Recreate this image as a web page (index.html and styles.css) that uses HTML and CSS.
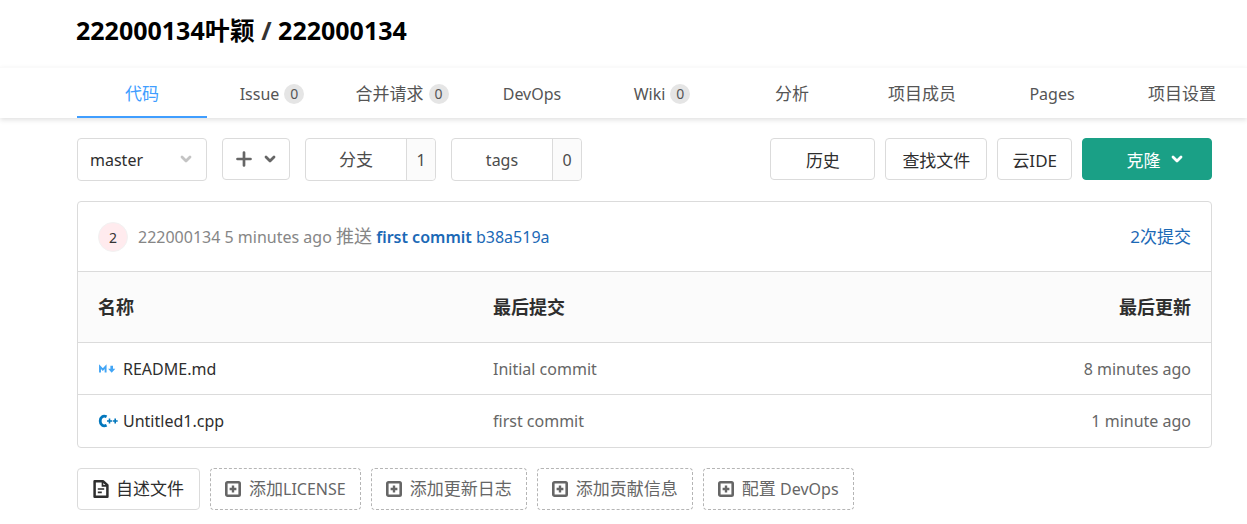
FILE: index.html
```html
<!DOCTYPE html>
<html lang="zh-CN">
<head>
  <meta charset="UTF-8">
  <title>222000134叶颖 / 222000134</title>
  <link rel="stylesheet" href="styles.css">
</head>
<body>

  <!-- shared icons -->
  <svg class="sprite" aria-hidden="true">
    <symbol id="chevron" viewBox="0 0 12 12">
      <path d="M2 4l4 4 4-4" fill="none" stroke="currentColor" stroke-width="2.8" stroke-linecap="round" stroke-linejoin="round"/>
    </symbol>
    <symbol id="plus-square" viewBox="0 0 16 16">
      <rect x="1.3" y="1.3" width="13.4" height="13.4" rx="1.2" fill="none" stroke="currentColor" stroke-width="2.6"/>
      <path d="M8 4.6v6.8M4.6 8h6.8" stroke="currentColor" stroke-width="2.4"/>
    </symbol>
  </svg>

  <header>
    <h1><a href="#">222000134叶颖</a> / <a href="#">222000134</a></h1>
  </header>

  <nav class="tabs">
    <a class="tab active" href="#">代码</a>
    <a class="tab latin" href="#">Issue <span class="badge">0</span></a>
    <a class="tab" href="#">合并请求 <span class="badge">0</span></a>
    <a class="tab latin" href="#">DevOps</a>
    <a class="tab latin" href="#">Wiki <span class="badge">0</span></a>
    <a class="tab" href="#">分析</a>
    <a class="tab" href="#">项目成员</a>
    <a class="tab latin" href="#">Pages</a>
    <a class="tab" href="#">项目设置</a>
  </nav>

  <main>
    <div class="toolbar">
      <div class="branch-select">
        <select aria-label="分支">
          <option>master</option>
        </select>
        <svg class="chevron"><use href="#chevron"/></svg>
      </div>
      <button class="btn add-btn" type="button" aria-label="添加">
        <svg class="plus" viewBox="0 0 16 16"><path d="M8 1.5v13M1.5 8h13" stroke="currentColor" stroke-width="2.7" stroke-linecap="round"/></svg>
        <svg class="chevron"><use href="#chevron"/></svg>
      </button>
      <a class="counter" href="#"><span class="counter-label">分支</span><span class="counter-num">1</span></a>
      <a class="counter latin" href="#"><span class="counter-label">tags</span><span class="counter-num">0</span></a>

      <div class="actions">
        <button class="btn history-btn" type="button">历史</button>
        <button class="btn" type="button">查找文件</button>
        <button class="btn ide-btn" type="button">云IDE</button>
        <button class="btn clone-btn" type="button">克隆 <svg class="chevron"><use href="#chevron"/></svg></button>
      </div>
    </div>

    <section class="files">
      <div class="commit">
        <span class="avatar">2</span>
        <p>222000134 5 minutes ago <span class="cjk">推送</span> <a class="message" href="#">first commit</a> <a href="#">b38a519a</a></p>
        <a class="commit-count" href="#">2次提交</a>
      </div>
      <table>
        <thead>
          <tr>
            <th class="name">名称</th>
            <th>最后提交</th>
            <th class="updated">最后更新</th>
          </tr>
        </thead>
        <tbody>
          <tr>
            <td>
              <a class="file" href="#">
                <svg class="file-icon" viewBox="0 0 20 16">
                  <path d="M2 11.5V5.6l2.8 3 2.8-3v5.9" fill="none" stroke="#42a5f5" stroke-width="1.9"/>
                  <path d="M12.4 4.7h2.6v3.1h2.3l-3.6 4-3.6-4h2.3z" fill="#42a5f5"/>
                </svg>
                README.md
              </a>
            </td>
            <td>Initial commit</td>
            <td class="updated">8 minutes ago</td>
          </tr>
          <tr>
            <td>
              <a class="file" href="#">
                <svg class="file-icon" viewBox="0 0 20 16" fill="none" stroke="#0277bd">
                  <path d="M8.6 3.8C5 2 2.2 4.3 2.2 8s2.8 6 6.4 4.2" stroke-width="2.8"/>
                  <path d="M9 8h5M11.5 5.5v5M14.7 8h5M17.2 5.5v5" stroke-width="1.6"/>
                </svg>
                Untitled1.cpp
              </a>
            </td>
            <td>first commit</td>
            <td class="updated">1 minute ago</td>
          </tr>
        </tbody>
      </table>
    </section>

    <div class="shortcuts">
      <a class="btn" href="#">
        <svg viewBox="0 0 16 18"><path d="M1.6 1.3h8.6L14.4 5.2v11.5H1.6z" fill="none" stroke="currentColor" stroke-width="2.5" stroke-linejoin="round"/><path d="M9.5 1v4.8H14M4.8 9h6.4M4.8 12.4h4" fill="none" stroke="currentColor" stroke-width="1.7"/></svg>
        自述文件
      </a>
      <a class="btn dashed" href="#"><svg><use href="#plus-square"/></svg><span>添加<span class="latin">LICENSE</span></span></a>
      <a class="btn dashed" href="#"><svg><use href="#plus-square"/></svg>添加更新日志</a>
      <a class="btn dashed" href="#"><svg><use href="#plus-square"/></svg>添加贡献信息</a>
      <a class="btn dashed" href="#"><svg><use href="#plus-square"/></svg><span>配置 <span class="latin">DevOps</span></span></a>
    </div>
  </main>

</body>
</html>
```

FILE: styles.css
```css
* {
  box-sizing: border-box;
}

body {
  margin: 0;
  font-family: "Noto Sans", "Noto Sans CJK SC", sans-serif;
  font-size: 16px;
  line-height: 24px;
  color: #2e2e2e;
  background-color: #fff;
}

a {
  color: inherit;
  text-decoration: none;
}

.sprite {
  display: none;
}

header {
  padding: 12px 76px 19px;
}

h1 {
  margin: 0;
  font-size: 25px;
  line-height: 36px;
  color: #333;
}

h1 a {
  color: #000;
}

/* tabs */
.tabs {
  display: flex;
  padding-left: 77px;
  border-top: 1px solid #fafafa;
  box-shadow: 0 2px 5px rgba(0, 0, 0, 0.12);
}

.tab {
  flex: none;
  display: flex;
  align-items: center;
  justify-content: center;
  gap: 5px;
  width: 130px;
  height: 50px;
  padding-top: 4px;
  border-bottom: 2px solid transparent;
  font-size: 17px;
  color: #555;
}

.tab.active {
  color: #409eff;
  border-bottom-color: #409eff;
}

.latin,
.tab.latin,
.counter.latin {
  font-size: 16px;
}

.badge {
  min-width: 20px;
  border-radius: 10px;
  background-color: #e5e5e5;
  font-size: 14px;
  line-height: 20px;
  text-align: center;
}

main {
  padding: 20px 35px 14px 77px;
}

/* toolbar */
.toolbar {
  display: flex;
  gap: 15px;
  margin-bottom: 20px;
}

.btn {
  display: inline-flex;
  align-items: center;
  justify-content: center;
  height: 42px;
  padding: 0 16px;
  border: 1px solid #dbdbdb;
  border-radius: 4px;
  background-color: #fff;
  font-family: inherit;
  font-size: 17px;
  color: #2e2e2e;
  cursor: pointer;
}

.chevron {
  width: 12px;
  height: 12px;
}

.branch-select {
  position: relative;
  width: 130px;
}

.branch-select select {
  appearance: none;
  width: 100%;
  height: 43px;
  padding: 0 12px;
  border: 1px solid #dbdbdb;
  border-radius: 4px;
  background-color: #fff;
  font-family: inherit;
  font-size: 16px;
  color: #2e2e2e;
}

.branch-select .chevron {
  position: absolute;
  top: 15px;
  right: 15px;
  color: #c4c4c4;
  pointer-events: none;
}

.add-btn {
  gap: 12px;
  width: 68px;
  padding: 0 12px;
  color: #666;
}

.plus {
  width: 16px;
  height: 16px;
}

.counter {
  display: flex;
  width: 131px;
  height: 43px;
  border: 1px solid #dbdbdb;
  border-radius: 4px;
  font-size: 17px;
  line-height: 42px;
  text-align: center;
  color: #4c4c4c;
}

.counter-label {
  flex: 1;
}

.counter-num {
  width: 29px;
  border-left: 1px solid #dbdbdb;
  border-radius: 0 4px 4px 0;
  background-color: #fbfbfb;
  font-size: 16px;
}

.actions {
  display: flex;
  gap: 10px;
  margin-left: auto;
}

.history-btn {
  width: 105px;
}

.ide-btn {
  padding: 0 14px;
}

.clone-btn {
  gap: 10px;
  width: 130px;
  padding-left: 30px;
  padding-right: 15px;
  border-color: #1aa086;
  background-color: #1aa086;
  color: #fff;
}

/* file list */
.files {
  border: 1px solid #dbdbdb;
  border-radius: 4px;
  margin-bottom: 20px;
}

.commit {
  display: flex;
  align-items: center;
  height: 69px;
  padding: 0 20px;
  color: #868686;
}

.commit p {
  margin: 0 auto 0 10px;
}

.commit a {
  color: #1b69b6;
}

.commit .message {
  font-weight: 600;
}

.commit-count {
  font-size: 17px;
}

.cjk {
  font-size: 18px;
}

.avatar {
  width: 30px;
  height: 30px;
  border: 1px solid #f2f2f2;
  border-radius: 50%;
  background-color: #ffebee;
  font-size: 14px;
  line-height: 30px;
  text-align: center;
  color: #333;
}

table {
  width: 100%;
  border-collapse: collapse;
}

th,
td {
  height: 52px;
  padding: 0 20px;
  border-top: 1px solid #dbdbdb;
  text-align: left;
}

th {
  height: 71px;
  background-color: #fbfbfb;
  font-size: 18px;
}

th.name {
  width: 395px;
}

td {
  color: #666;
}

th.updated,
td.updated {
  text-align: right;
}

.file {
  display: flex;
  align-items: center;
  gap: 5px;
  color: #2e2e2e;
}

.file-icon {
  width: 20px;
  height: 16px;
}

/* shortcuts under the list */
.shortcuts {
  display: flex;
  gap: 10px;
}

.shortcuts .btn {
  gap: 7px;
  padding: 0 15px;
}

.shortcuts svg {
  width: 16px;
  height: 18px;
}

.shortcuts .dashed {
  border: 1px dashed #b5b5b5;
  padding: 0 14px;
  gap: 8px;
  color: #666;
}
```
